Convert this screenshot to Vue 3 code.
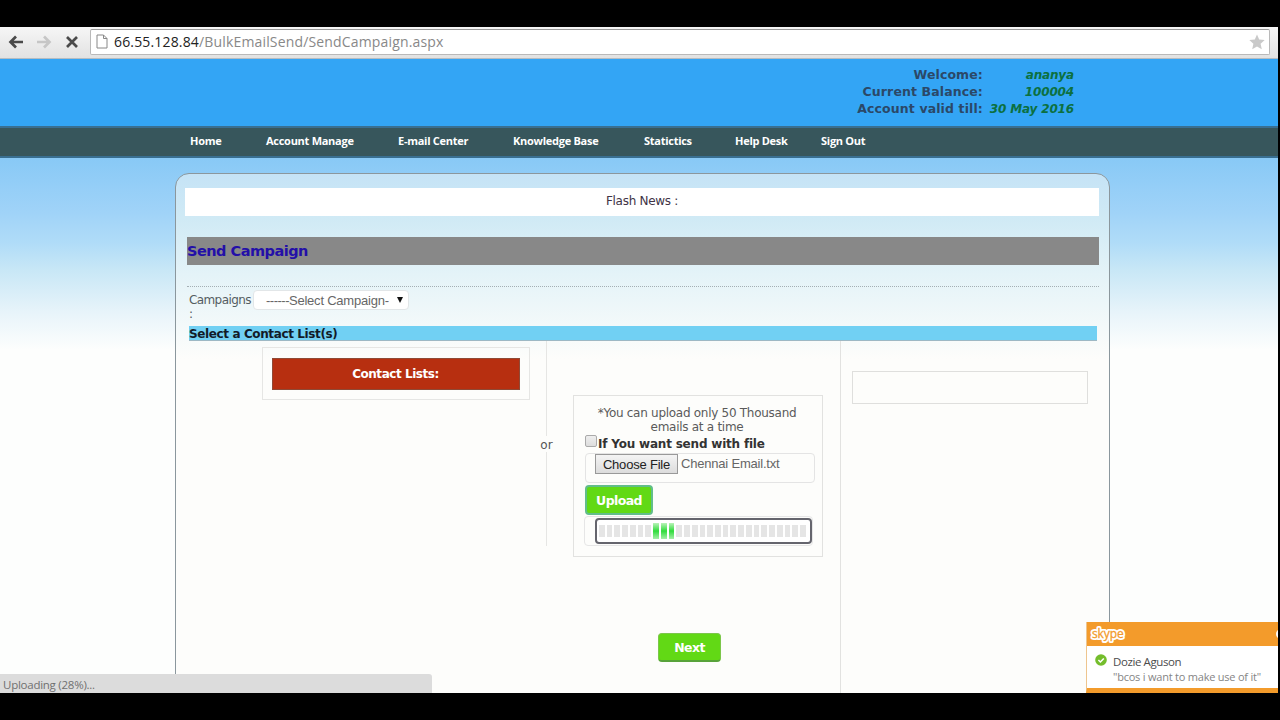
<script setup>
import { ref } from "vue";

const nav_items = ["Home", "Account Manage", "E-mail Center", "Knowledge Base", "Statictics", "Help Desk", "Sign Out"];

const account = [
  { label: "Welcome:", value: "ananya" },
  { label: "Current Balance:", value: "100004" },
  { label: "Account valid till:", value: "30 May 2016" },
];

const upload_percent = ref(28);
const with_file = ref(false);
const segments = 27;
const active = [8, 9, 10];
</script>

<template>
  <div class="screen">
    <div class="toolbar">
      <svg class="tool" viewBox="0 0 16 16"><path d="M15 8H3M8 2.5L2.5 8L8 13.5" /></svg>
      <svg class="tool off" viewBox="0 0 16 16"><path d="M1 8H13M8 2.5L13.5 8L8 13.5" /></svg>
      <svg class="tool" viewBox="0 0 16 16"><path d="M3 3L13 13M13 3L3 13" /></svg>
      <div class="address">
        <svg class="page_icon" viewBox="0 0 12 15"><path d="M1 1H7.5L11 4.5V14H1ZM7.5 1V4.5H11" /></svg>
        <p class="url"><span>66.55.128.84</span>/BulkEmailSend/SendCampaign.aspx</p>
        <svg class="star" viewBox="0 0 16 16">
          <path d="M8 0.5L10.2 5.5L15.7 6.1L11.6 9.8L12.8 15.2L8 12.4L3.2 15.2L4.4 9.8L0.3 6.1L5.8 5.5Z" />
        </svg>
      </div>
    </div>

    <div class="header">
      <dl class="account">
        <template v-for="row in account" :key="row.label">
          <dt>{{ row.label }}</dt>
          <dd>{{ row.value }}</dd>
        </template>
      </dl>
    </div>

    <nav class="nav">
      <a v-for="item in nav_items" :key="item">{{ item }}</a>
    </nav>

    <div class="page">
      <div class="card">
        <div class="flash">Flash News :</div>
        <h1 class="title">Send Campaign</h1>

        <div class="campaigns">
          <p class="campaigns_label">Campaigns<br />:</p>
          <div class="select">
            <span class="select_text"><span class="dashes">------</span>Select Campaign-</span>
            <i class="arrow"></i>
          </div>
        </div>

        <h2 class="subtitle">Select a Contact List(s)</h2>

        <div class="columns">
          <div class="col_lists">
            <div class="lists_box">
              <div class="lists_head">Contact Lists:</div>
            </div>
          </div>

          <div class="or"><span>or</span></div>

          <div class="col_upload">
            <div class="upload_box">
              <p class="note">*You can upload only 50 Thousand<br />emails at a time</p>
              <label class="check"><input v-model="with_file" type="checkbox" /><span>If You want send with file</span></label>
              <div class="file">
                <button class="choose">Choose File</button>
                <span class="file_name">Chennai Email.txt</span>
              </div>
              <button class="green upload">Upload</button>
              <div class="progress_wrap">
                <div class="progress">
                  <i v-for="n in segments" :key="n" :class="{ on: active.includes(n) }"></i>
                </div>
              </div>
            </div>
            <button class="green next">Next</button>
          </div>

          <div class="col_right">
            <div class="empty_box"></div>
          </div>
        </div>
      </div>

      <div class="status">Uploading ({{ upload_percent }}%)...</div>

      <div class="skype">
        <div class="skype_head">
          <svg class="skype_logo" viewBox="0 0 36 17">
            <text class="halo" x="2" y="12">skype</text>
            <text class="word" x="2" y="12">skype</text>
          </svg>
          <i class="skype_close"></i>
        </div>
        <div class="skype_body">
          <svg class="online" viewBox="0 0 12 12">
            <circle cx="6" cy="6" r="5.8" />
            <path d="M3.4 6L5.4 8L8.8 4.4" />
          </svg>
          <div>
            <p class="skype_name">Dozie Aguson</p>
            <p class="skype_msg">"bcos i want to make use of it"</p>
          </div>
        </div>
      </div>
    </div>
  </div>
</template>

<style>
body {
  background: #000;
}
</style>

<style scoped>
* {
  box-sizing: border-box;
}

p, h1, h2, dl, dd {
  margin: 0;
}

.screen {
  width: 1280px;
  height: 720px;
  padding: 27px 2px 27px 0;
  background: #000;
  overflow: hidden;
  font-family: "DejaVu Sans", sans-serif;
  white-space: nowrap;
}

.toolbar {
  display: flex;
  align-items: center;
  gap: 12px;
  height: 32px;
  padding: 0 8px 2px 8px;
  background: linear-gradient(#f6f6f6, #e2e2e2);
  border-bottom: 1px solid #b4bcc2;
}

.tool {
  width: 16px;
  height: 16px;
  fill: none;
  stroke: #4a4a4a;
  stroke-width: 2.7;
}

.off {
  stroke: #c6c6c6;
}

.address {
  display: flex;
  align-items: center;
  flex: 1;
  height: 26px;
  margin-left: -2px;
  padding: 0 4px 0 5px;
  background: #fff;
  border: 1px solid #b9b9b9;
  border-top-color: #999;
  border-radius: 2px;
}

.page_icon {
  width: 12px;
  height: 15px;
  fill: #fff;
  stroke: #888;
}

.url {
  flex: 1;
  margin-left: 6px;
  color: #888;
  font: 14px/20px "Open Sans", sans-serif;
  letter-spacing: 0.16px;
}

.url span {
  color: #222;
}

.star {
  width: 16px;
  height: 16px;
  fill: #c9c9c9;
}

.header {
  height: 67px;
  padding: 7px 204px 0 0;
  background: #33a5f5;
}

.account {
  display: grid;
  grid-template-columns: auto 91px;
  justify-content: end;
  font-size: 12.5px;
  font-weight: bold;
  line-height: 18px;
  text-align: right;
}

.account dt {
  height: 17px;
  color: #2b4868;
  letter-spacing: 0.12px;
}

.account dd {
  height: 17px;
  color: #0c7040;
  font-size: 12px;
  font-style: italic;
  letter-spacing: -0.15px;
}

.nav {
  display: grid;
  grid-template-columns: 76px 132px 115px 131px 91px 86px 60px;
  height: 32px;
  padding-left: 190px;
  background: #37565c;
  border-top: 2px solid #396f91;
  border-bottom: 2px solid #396f91;
  color: #fff;
  font: bold 11px/25px "Open Sans", sans-serif;
  letter-spacing: -0.27px;
}

.page {
  position: relative;
  height: 535px;
  padding: 15px 0 0 175px;
  background: linear-gradient(#88c9f6 0, #a0d3f8 55px, #b0dcf8 85px, #c8e7f6 112px, #e8f4fa 155px, #fdfefd 192px);
  overflow: hidden;
}

.card {
  width: 935px;
  height: 560px;
  padding: 14px 10px 0 9px;
  background: linear-gradient(#c5e3f6 0, #d0eaf5 45px, #e4f3f8 100px, #fdfdfb 185px);
  border: 1px solid #8b979d;
  border-radius: 14px 14px 0 0;
}

.flash {
  height: 28px;
  background: #fff;
  color: #403345;
  font-size: 12px;
  line-height: 27px;
  letter-spacing: -0.28px;
  text-align: center;
}

.title {
  height: 28px;
  margin: 21px 0 0 2px;
  background: #888;
  color: #230fa8;
  font-size: 14.5px;
  line-height: 29px;
  letter-spacing: -0.5px;
}

.campaigns {
  display: flex;
  height: 40px;
  margin: 21px 0 0 2px;
  padding: 3px 0 0 2px;
  border-top: 1px dotted #a4afb4;
}

.campaigns_label {
  width: 64px;
  padding-top: 3px;
  color: #555d62;
  font-size: 12px;
  line-height: 14px;
  letter-spacing: -0.6px;
}

.select {
  display: flex;
  justify-content: space-between;
  align-items: center;
  width: 156px;
  height: 20px;
  padding: 0 5px 0 12px;
  background: #fff;
  border: 1px solid #e2e6e8;
  border-radius: 4px;
}

.select_text {
  color: #666;
  font: 13px "Liberation Sans", sans-serif;
  letter-spacing: -0.22px;
}

.dashes {
  letter-spacing: -0.5px;
}

.arrow {
  border: 3.5px solid transparent;
  border-top: 6px solid #111;
  border-bottom: 0;
}

.subtitle {
  height: 15px;
  margin: 0 2px 0 4px;
  background: #71d0f3;
  border-bottom: 1px solid #9db8c4;
  color: #111b28;
  font-size: 12px;
  line-height: 16px;
  letter-spacing: -0.38px;
}

.columns {
  display: flex;
  height: 380px;
}

.col_lists {
  width: 346px;
  padding: 6px 0 0 77px;
}

.lists_box {
  width: 268px;
  height: 53px;
  padding: 10px 9px;
  border: 1px solid #e6e6e4;
}

.lists_head {
  height: 32px;
  padding-right: 1px;
  background: #b72f10;
  border: 1px solid #8f4a36;
  color: #fff;
  font-size: 12px;
  font-weight: bold;
  line-height: 30px;
  letter-spacing: -0.45px;
  text-align: center;
}

.or {
  display: flex;
  align-items: center;
  justify-content: center;
  width: 31px;
  height: 205px;
  background: linear-gradient(#e6e6e4, #e6e6e4) 15px 0 / 1px 100% no-repeat;
  color: #555;
  font-size: 12px;
}

.or span {
  padding: 2px 1px 0;
  background: #fdfdfb;
}

.col_upload {
  display: flex;
  flex-flow: column;
  align-items: center;
  width: 279px;
  padding: 54px 17px 0 11px;
  border-right: 1px solid #e2e2e0;
}

.upload_box {
  width: 250px;
  height: 162px;
  padding: 10px 6px 0 11px;
  border: 1px solid #e2e2e0;
}

.note {
  padding-right: 7px;
  color: #5a5a5a;
  font-size: 12px;
  line-height: 14px;
  letter-spacing: -0.28px;
  text-align: center;
}

.check {
  display: flex;
  height: 19px;
  color: #333;
  font-size: 12px;
  font-weight: bold;
  line-height: 20px;
  letter-spacing: -0.2px;
}

.check input {
  appearance: none;
  width: 12px;
  height: 12px;
  margin: 1px 1px 0 0;
  background: linear-gradient(#eee, #ddd);
  border: 1px solid #aaa;
  border-radius: 2px;
}

.file {
  display: flex;
  align-items: flex-start;
  width: 230px;
  height: 30px;
  padding-left: 9px;
  border: 1px solid #e4e4e4;
  border-radius: 4px;
}

.choose {
  width: 83px;
  height: 20px;
  padding: 0;
  background: linear-gradient(#f4f4f4, #dcdcdc);
  border: 1px solid #999;
  color: #222;
  font: 13px/17px "Liberation Sans", sans-serif;
  letter-spacing: -0.2px;
}

.file_name {
  margin-left: 3px;
  color: #666;
  font: 13px/20px "Liberation Sans", sans-serif;
  letter-spacing: -0.2px;
}

.green {
  padding: 0;
  background: #62d915;
  border: 1px solid #7cc64a;
  border-bottom: 2px solid #58a33a;
  border-radius: 4px;
  color: #fff;
  font: bold 12.5px "DejaVu Sans", sans-serif;
  letter-spacing: -0.6px;
}

.upload {
  display: block;
  width: 68px;
  height: 30px;
  margin-top: 2px;
  border: 2px solid #62bd8b;
}

.progress_wrap {
  width: 229px;
  height: 30px;
  margin: 1px 0 0 -1px;
  padding: 1px 0 0 10px;
  border: 1px solid #e6e6e6;
  border-radius: 4px;
}

.progress {
  display: flex;
  align-items: center;
  gap: 2px;
  width: 217px;
  height: 26px;
  padding: 0 4px 0 2px;
  background: #fff;
  border: 2px solid #65656d;
  border-radius: 4px;
}

.progress i {
  flex: 1;
  height: 12px;
  background: #e5e5e5;
}

.progress i.on {
  height: 16px;
  background: linear-gradient(#b9f3b9, #30dc3c 50%, #a5efa8);
}

.next {
  width: 63px;
  height: 29px;
  margin: 76px 0 0 -17px;
}

.col_right {
  padding: 30px 0 0 11px;
}

.empty_box {
  width: 236px;
  height: 33px;
  border: 1px solid #dfdfdd;
}

.status {
  position: absolute;
  left: 0;
  bottom: 0;
  width: 432px;
  height: 19px;
  padding-left: 3px;
  background: #dcdcdc;
  border-top-right-radius: 3px;
  color: #707070;
  font: 11.5px/22px "Open Sans", sans-serif;
  letter-spacing: -0.25px;
}

.skype {
  position: absolute;
  right: 0;
  bottom: 0;
  width: 192px;
  height: 71px;
  background: #fff;
  border-left: 1px solid #eec58e;
  border-bottom: 5px solid #f39b2b;
}

.skype_head {
  display: flex;
  align-items: center;
  justify-content: space-between;
  height: 24px;
  padding-left: 3px;
  background: #f39b2b;
  overflow: hidden;
}

.skype_logo {
  width: 36px;
  height: 17px;
  overflow: visible;
  font: 12px "Open Sans", sans-serif;
  letter-spacing: -0.1px;
}

.halo {
  fill: #fff;
  stroke: #fff;
  stroke-width: 4;
  stroke-linejoin: round;
}

.word {
  fill: #f39b2b;
  stroke: #f39b2b;
  stroke-width: 0.3;
}

.skype_close {
  width: 10px;
  height: 10px;
  margin-right: -8px;
  border: 2px solid #fff;
  border-radius: 50%;
}

.skype_body {
  display: flex;
  padding: 8px 0 0 8px;
}

.online {
  width: 12px;
  height: 12px;
  margin: 0 6px 0 0;
  fill: #74bd2c;
}

.online path {
  fill: none;
  stroke: #fff;
  stroke-width: 1.5;
}

.skype_name {
  color: #4c4c4c;
  font: 11.5px/15px "Open Sans", sans-serif;
  letter-spacing: -0.4px;
}

.skype_msg {
  color: #858585;
  font: 11px/15px "Open Sans", sans-serif;
  letter-spacing: -0.22px;
}
</style>
